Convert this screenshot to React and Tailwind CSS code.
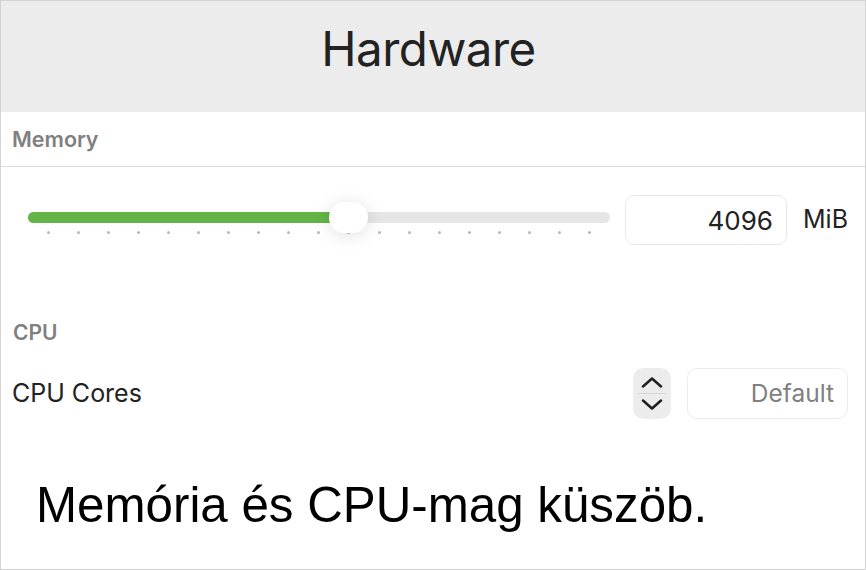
import React from 'react';

const ui = { fontFamily: 'Inter, "Noto Sans", sans-serif' };
const helv = { fontFamily: '"Liberation Sans", Arial, sans-serif' };

const ticks = Array.from({ length: 19 }, (_, i) => i);

function Slider() {
  return (
    <div className="relative h-[50px] w-[582px]">
      <div className="absolute left-0 right-0 top-[17px] h-[11px] rounded-full bg-[#e6e6e6]">
        <div className="h-full w-[310px] rounded-full bg-[#62b546]" />
      </div>
      <div className="absolute left-[19px] right-[19px] top-[36px] flex justify-between">
        {ticks.map(i => (
          <span key={i} className="h-[3px] w-[3px] rounded-full bg-[#b9b9b9]" />
        ))}
      </div>
      <div className="absolute left-[301px] top-[7px] h-[31px] w-[39px] rounded-full bg-white shadow-[0_2px_18px_rgba(0,0,0,0.13)]" />
    </div>
  );
}

function Stepper() {
  return (
    <div className="flex h-[51px] w-[38px] flex-col items-center justify-center rounded-[10px] bg-[#ececec]">
      <svg width="22" height="11" viewBox="0 0 22 11" fill="none">
        <path d="M2 9.5 L11 1.5 L20 9.5" stroke="#1f1f1f" strokeWidth="2.5" strokeLinecap="round" strokeLinejoin="round" />
      </svg>
      <div className="my-[5px] h-px w-[28px] bg-[#d6d6d6]" />
      <svg width="22" height="11" viewBox="0 0 22 11" fill="none">
        <path d="M2 1.5 L11 9.5 L20 1.5" stroke="#1f1f1f" strokeWidth="2.5" strokeLinecap="round" strokeLinejoin="round" />
      </svg>
    </div>
  );
}

export default function App() {
  return (
    <div className="flex h-[570px] w-[866px] flex-col overflow-hidden border border-[#d3d3d3] bg-white">
      {/* Header */}
      <div className="h-[111px] shrink-0 bg-[#ececec] pr-[9px] pt-[24px] text-center">
        <h1 className="text-[47.5px] leading-none tracking-[-0.01em] text-[#222]" style={ui}>Hardware</h1>
      </div>

      {/* Memory */}
      <div className="h-[55px] shrink-0 border-b border-[#dcdcdc] pl-[11px] pt-[17px]" style={ui}>
        <div className="text-[21.5px] font-semibold leading-none text-[#808080]">Memory</div>
      </div>

      <div className="flex items-center pl-[27px] pt-[28px]" style={ui}>
        <Slider />
        <div className="ml-[15px] flex h-[50px] w-[162px] items-center justify-end rounded-[9px] border border-[#e8e8e8] pr-[13px] text-[26px] text-[#222]">
          4096
        </div>
        <span className="ml-[16px] text-[25px] text-[#222]">MiB</span>
      </div>

      {/* CPU */}
      <div className="mt-[77px] pl-[12px] text-[21px] font-semibold leading-none text-[#808080]" style={ui}>
        CPU
      </div>

      <div className="mt-[25px] flex h-[51px] items-center pl-[11px] pr-[17px]" style={ui}>
        <span className="text-[25px] text-[#222]">CPU Cores</span>
        <div className="ml-auto">
          <Stepper />
        </div>
        <div className="ml-[16px] flex h-[51px] w-[161px] items-center justify-end rounded-[10px] border border-[#ececec] pr-[13px] text-[24.5px] text-[#808080]">
          Default
        </div>
      </div>

      {/* Caption */}
      <div className="mt-[61px] pl-[35px] text-[49.3px] leading-none text-black" style={helv}>
        Memória és CPU-mag küszöb.
      </div>
    </div>
  );
}
